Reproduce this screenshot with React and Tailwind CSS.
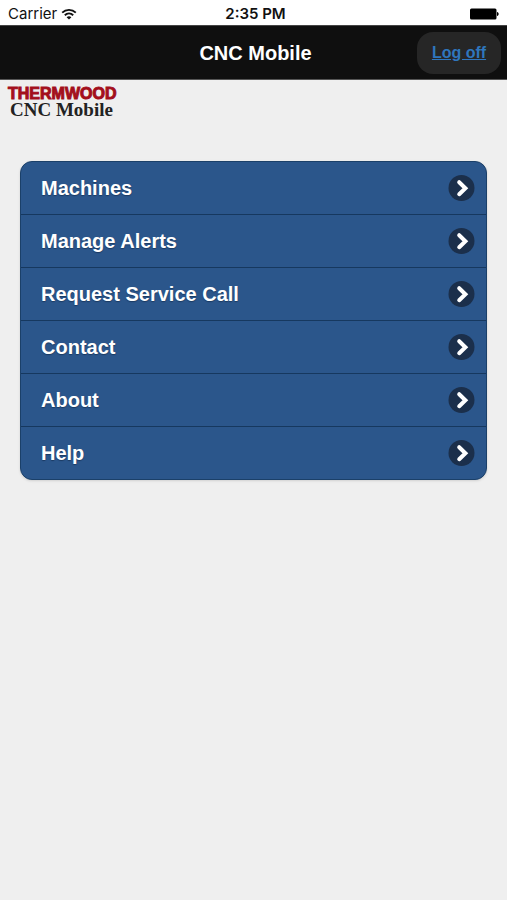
const items = ["Machines", "Manage Alerts", "Request Service Call", "Contact", "About", "Help"];

function WifiIcon() {
  return (
    <svg viewBox="0 0 16 12" className="h-3 w-4" aria-hidden="true">
      <g fill="none" stroke="#111" strokeWidth="1.9">
        <path d="M1.2 4.6C5 .9 11 .9 14.8 4.6" />
        <path d="M3.8 7.2c2.4-2.2 6-2.2 8.4 0" />
      </g>
      <path d="M8 11.6 5.6 9.2c1.4-1.3 3.4-1.3 4.8 0z" fill="#111" />
    </svg>
  );
}

function BatteryIcon() {
  return (
    <svg viewBox="0 0 30 12" className="h-3 w-[30px]" aria-hidden="true">
      <rect x="1" y="0.5" width="26.5" height="11" rx="1.5" fill="#000" />
      <path d="M28 4c2.2.4 2.2 3.6 0 4z" fill="#000" />
    </svg>
  );
}

function ArrowIcon() {
  return (
    <svg viewBox="0 0 27 27" className="size-[27px] shrink-0" aria-hidden="true">
      <circle cx="13.5" cy="13" r="13" fill="#1b2f4b" />
      <path
        d="M11.2 7.2 17.4 13.2 11.2 19.2"
        fill="none"
        stroke="#fff"
        strokeWidth="4"
        strokeLinecap="round"
      />
    </svg>
  );
}

export default function App() {
  return (
    <div className="min-h-screen bg-[#efefef] font-['Liberation_Sans',Arial,sans-serif]">
      <div className="grid h-[25px] grid-cols-[1fr_auto_1fr] items-center bg-white px-2 pt-0.5 font-[Inter,sans-serif] text-[15px] leading-5 text-[#111]">
        <div className="flex items-center gap-1">
          <span>Carrier</span>
          <WifiIcon />
        </div>
        <span className="pl-1 text-center font-semibold">2:35 PM</span>
        <div className="flex justify-end">
          <BatteryIcon />
        </div>
      </div>
      <header className="grid h-[55px] grid-cols-[1fr_auto_1fr] items-center border-y border-t-[#444] border-b-[#555] bg-[#0f0f0f] px-1.5">
        <h1 className="col-start-2 pl-1 text-xl font-bold text-white">CNC Mobile</h1>
        <a
          href="#logoff"
          className="flex h-[42px] w-[84px] items-center justify-center justify-self-end rounded-2xl bg-[#262626] text-base font-bold text-[#2f76bd] underline"
        >
          Log off
        </a>
      </header>
      <main>
        <div className="flex flex-col items-start px-2 pt-1.5">
          <span className="text-base leading-4 font-bold text-[#a30f1c] [-webkit-text-stroke:1px_#a30f1c]">THERMWOOD</span>
          <span className="pl-0.5 font-['Liberation_Serif','Times_New_Roman',serif] text-[19px] leading-4 font-bold text-[#222]">CNC Mobile</span>
        </div>
        <nav className="mx-5 mt-[43px]">
          <ul className="divide-y divide-[#16385f] overflow-hidden rounded-xl border border-[#1b4069] bg-[#2b568b] shadow">
            {items.map((label) => (
              <li key={label}>
                <a
                  href="#menu"
                  className="flex h-[52px] items-center justify-between pr-[11px] pl-5 text-xl font-bold text-white [text-shadow:0_1px_1px_#1b3a62]"
                >
                  {label}
                  <ArrowIcon />
                </a>
              </li>
            ))}
          </ul>
        </nav>
      </main>
    </div>
  );
}
